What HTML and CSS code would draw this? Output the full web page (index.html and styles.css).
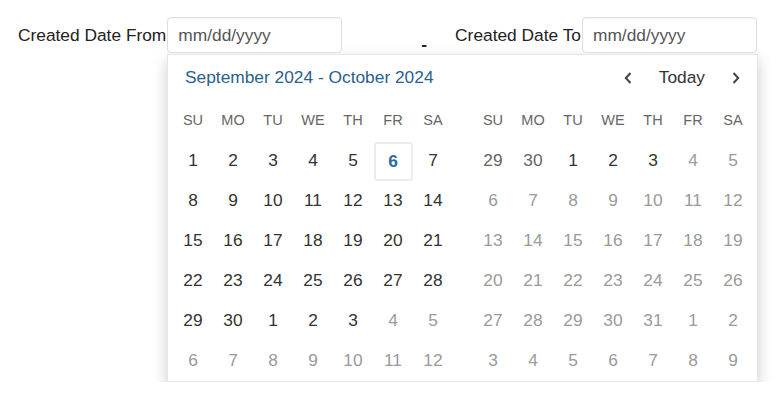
FILE: index.html
```html
<!DOCTYPE html>
<html lang="en">

<head>
    <meta charset="UTF-8">
    <meta name="viewport" content="width=device-width, initial-scale=1.0">
    <title>Date range</title>
    <link rel="stylesheet" href="styles.css">
</head>

<body>

    <div class="filters">
        <label class="field-label" for="dateFrom">Created Date From</label>
        <input class="date-input" type="text" id="dateFrom" placeholder="mm/dd/yyyy">
        <span class="dash">-</span>
        <label class="field-label" for="dateTo">Created Date To</label>
        <input class="date-input" type="text" id="dateTo" placeholder="mm/dd/yyyy">
    </div>

    <div class="calendar">
        <div class="cal-head">
            <span class="cal-title">September 2024 - October 2024</span>
            <div class="cal-nav">
                <span class="nav-btn">
                    <svg width="8" height="12" viewBox="0 0 8 12"><path d="M6.5 1 L1.8 6 L6.5 11" fill="none" stroke="#444" stroke-width="2"/></svg>
                </span>
                <span class="today-link">Today</span>
                <span class="nav-btn">
                    <svg width="8" height="12" viewBox="0 0 8 12"><path d="M1.5 1 L6.2 6 L1.5 11" fill="none" stroke="#444" stroke-width="2"/></svg>
                </span>
            </div>
        </div>
        <div class="months">
            <div class="month" id="monthLeft"></div>
            <div class="month" id="monthRight"></div>
        </div>
    </div>

    <script src="calendar.js"></script>
</body>

</html>
```

FILE: calendar.js
```js
const weekdays = ["SU", "MO", "TU", "WE", "TH", "FR", "SA"];

// last selectable day is Oct 3 2024
const lastEnabled = new Date(2024, 9, 3);
const today = new Date(2024, 8, 6);

function buildMonth(el, year, month) {
    weekdays.forEach(function (w) {
        const d = document.createElement("div");
        d.className = "wd";
        d.textContent = w;
        el.appendChild(d);
    });
    const first = new Date(year, month, 1);
    for (let i = 0; i < 42; i++) {
        const day = new Date(year, month, 1 - first.getDay() + i);
        const cell = document.createElement("div");
        cell.className = "day";
        if (day > lastEnabled) {
            cell.className += " disabled";
        } else if (day.getMonth() !== month && month === 9) {
            cell.className += " off";
        }
        if (day.getTime() === today.getTime()) {
            cell.className += " today";
        }
        const span = document.createElement("span");
        span.textContent = day.getDate();
        cell.appendChild(span);
        el.appendChild(cell);
    }
}

buildMonth(document.getElementById("monthLeft"), 2024, 8);
buildMonth(document.getElementById("monthRight"), 2024, 9);
```

FILE: styles.css
```css
*{
    margin: 0;
    box-sizing: border-box;
}
body{
    font-family: "Liberation Sans", Arial, sans-serif;
    font-size: 17.33px;
    color: #333;
    background: #fff;
}
.filters{
    display: flex;
    align-items: flex-start;
    padding: 17px 0 0 18px;
}
.field-label{
    line-height: 36px;
    padding-right: 1px;
    color: #222;
    white-space: nowrap;
}
.date-input{
    display: block;
    width: 175px;
    height: 36px;
    padding: 0 10px;
    border: 1px solid #dedede;
    border-radius: 4px;
    box-shadow: inset 0 1px 1px rgba(0, 0, 0, 0.04);
    font-family: inherit;
    font-size: 17.33px;
    color: #555;
    outline: none;
}
.date-input::placeholder{
    color: #555;
}
.dash{
    font-weight: bold;
    color: #222;
    margin: 18px 28px 0 79px;
    line-height: 18px;
}
.calendar{
    width: 591px;
    margin: 1px 0 0 167px;
    background: #fff;
    border: 1px solid #e6e6e6;
    box-shadow: 0 6px 14px rgba(0, 0, 0, 0.2);
}
.cal-head{
    display: flex;
    align-items: center;
    justify-content: space-between;
    height: 45px;
    padding: 0 6px 0 17px;
}
.cal-title{
    color: #2b5f8e;
}
.cal-nav{
    display: flex;
    align-items: center;
    gap: 16px;
}
.nav-btn{
    width: 30px;
    height: 30px;
    display: flex;
    align-items: center;
    justify-content: center;
}
.today-link{
    color: #333;
}
.months{
    display: flex;
    gap: 20px;
    padding: 0 4px 1px 5px;
}
.month{
    display: grid;
    grid-template-columns: repeat(7, 40px);
    grid-auto-rows: 40px;
}
.wd{
    display: flex;
    align-items: center;
    justify-content: center;
    font-size: 14.5px;
    color: #666;
}
.day{
    display: flex;
    align-items: center;
    justify-content: center;
    color: #333;
}
.day.off{
    color: #666;
}
.day.disabled{
    color: #9a9a9a;
}
.day.today span{
    display: flex;
    align-items: center;
    justify-content: center;
    width: 39px;
    height: 39px;
    margin-top: 2px;
    border: 2px solid #ececec;
    border-radius: 3px;
    font-weight: bold;
    color: #2a6aa6;
}
```
